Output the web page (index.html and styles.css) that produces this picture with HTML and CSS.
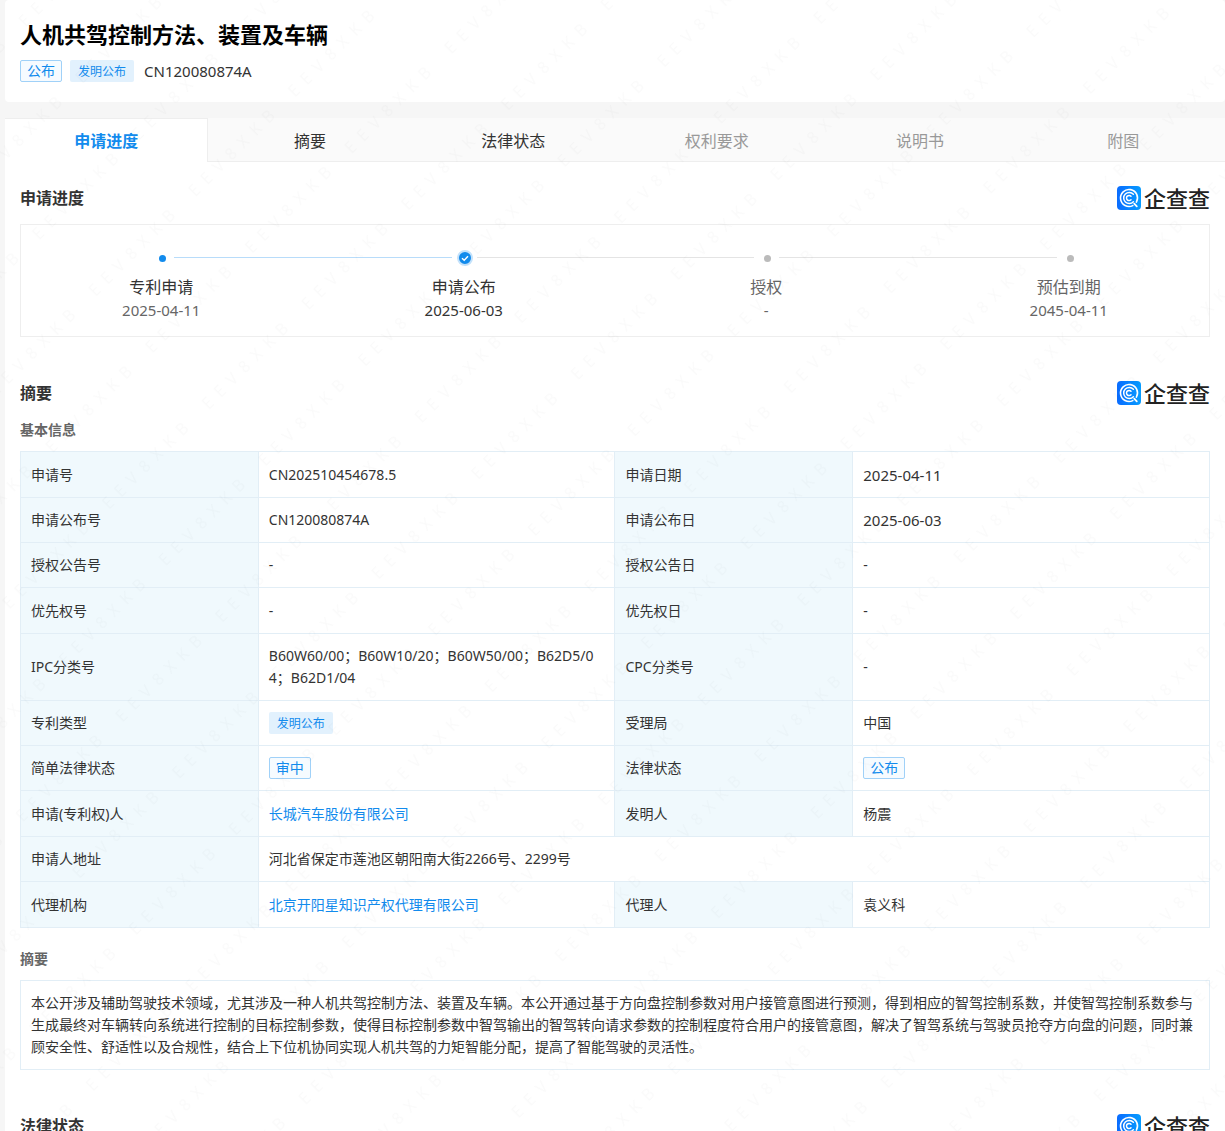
FILE: index.html
```html
<!DOCTYPE html>
<html lang="zh-CN">
<head>
<meta charset="utf-8">
<meta name="viewport" content="width=device-width, initial-scale=1">
<title>人机共驾控制方法、装置及车辆</title>
<link rel="stylesheet" href="styles.css">
</head>
<body>
<svg class="watermark" aria-hidden="true">
  <defs>
    <linearGradient id="brand-bg" x1="0" y1="0" x2="1" y2="0">
      <stop offset="0" stop-color="#0a6cff"/>
      <stop offset="1" stop-color="#069cff"/>
    </linearGradient>
    <symbol id="brand-icon" viewBox="0 0 24 24">
      <rect width="24" height="24" rx="4" fill="url(#brand-bg)"/>
      <g fill="none" stroke="#fff" stroke-linecap="round">
        <path d="M15.8 19.6A8.5 8.5 0 1 1 19.4 16.2" stroke-width="1.6"/>
        <path d="M16.4 15.8A5.6 5.6 0 1 1 16.4 8.2" stroke-width="1.5"/>
        <path d="M14 13.8A2.6 2.6 0 1 1 14 10.2" stroke-width="1.5"/>
        <path d="M17.2 17.6L19.8 20.4" stroke-width="1.8"/>
      </g>
    </symbol>
    <pattern id="mark-tile" width="141" height="80" patternUnits="userSpaceOnUse" patternTransform="translate(650 54) rotate(-45)">
      <text x="0" y="20">E&ensp;E&ensp;V&ensp;8&ensp;X&ensp;K&ensp;B</text>
    </pattern>
  </defs>
  <rect width="100%" height="100%" fill="url(#mark-tile)"/>
</svg>

<header class="header">
  <h1 class="title">人机共驾控制方法、装置及车辆</h1>
  <div class="meta">
    <span class="tag tag-line">公布</span>
    <span class="tag tag-fill">发明公布</span>
    <span class="num">CN120080874A</span>
  </div>
</header>

<main class="card">
  <nav class="tabs">
    <a class="tab active" href="#progress">申请进度</a>
    <a class="tab" href="#abstract">摘要</a>
    <a class="tab" href="#legal">法律状态</a>
    <a class="tab disabled" href="#claims">权利要求</a>
    <a class="tab disabled" href="#description">说明书</a>
    <a class="tab disabled" href="#figures">附图</a>
  </nav>

  <section class="section" id="progress">
    <div class="section-head">
      <h2>申请进度</h2>
      <span class="brand"><svg aria-hidden="true"><use href="#brand-icon"/></svg>企查查</span>
    </div>
    <div class="progress">
      <ol class="steps">
        <li class="step done">
          <span class="mark"><i class="dot"></i></span>
          <span class="step-name">专利申请</span>
          <span class="step-date num">2025-04-11</span>
        </li>
        <li class="step current">
          <span class="mark"><svg viewBox="0 0 16 16" aria-hidden="true"><circle cx="8" cy="8" r="7" fill="#128bed" stroke="#c4e2fb" stroke-width="2"/><path d="M5 8.2l2.2 2.1L11 6.2" fill="none" stroke="#fff" stroke-width="1.4"/></svg></span>
          <span class="step-name">申请公布</span>
          <span class="step-date num">2025-06-03</span>
        </li>
        <li class="step">
          <span class="mark"><i class="dot"></i></span>
          <span class="step-name">授权</span>
          <span class="step-date num">-</span>
        </li>
        <li class="step">
          <span class="mark"><i class="dot"></i></span>
          <span class="step-name">预估到期</span>
          <span class="step-date num">2045-04-11</span>
        </li>
      </ol>
    </div>
  </section>

  <section class="section" id="abstract">
    <div class="section-head">
      <h2>摘要</h2>
      <span class="brand"><svg aria-hidden="true"><use href="#brand-icon"/></svg>企查查</span>
    </div>
    <h3>基本信息</h3>
    <table class="info">
      <tbody>
        <tr><th scope="row">申请号</th><td>CN202510454678.5</td><th scope="row">申请日期</th><td class="num">2025-04-11</td></tr>
        <tr><th scope="row">申请公布号</th><td>CN120080874A</td><th scope="row">申请公布日</th><td class="num">2025-06-03</td></tr>
        <tr><th scope="row">授权公告号</th><td>-</td><th scope="row">授权公告日</th><td>-</td></tr>
        <tr><th scope="row">优先权号</th><td>-</td><th scope="row">优先权日</th><td>-</td></tr>
        <tr><th scope="row">IPC分类号</th><td>B60W60/00；B60W10/20；B60W50/00；B62D5/0<br>4；B62D1/04</td><th scope="row">CPC分类号</th><td>-</td></tr>
        <tr><th scope="row">专利类型</th><td><span class="tag tag-fill">发明公布</span></td><th scope="row">受理局</th><td>中国</td></tr>
        <tr><th scope="row">简单法律状态</th><td><span class="tag tag-line">审中</span></td><th scope="row">法律状态</th><td><span class="tag tag-line">公布</span></td></tr>
        <tr><th scope="row">申请(专利权)人</th><td><a href="#applicant">长城汽车股份有限公司</a></td><th scope="row">发明人</th><td>杨震</td></tr>
        <tr><th scope="row">申请人地址</th><td colspan="3">河北省保定市莲池区朝阳南大街2266号、2299号</td></tr>
        <tr><th scope="row">代理机构</th><td><a href="#agency">北京开阳星知识产权代理有限公司</a></td><th scope="row">代理人</th><td>袁义科</td></tr>
      </tbody>
    </table>
    <h3>摘要</h3>
    <p class="abstract">本公开涉及辅助驾驶技术领域，尤其涉及一种人机共驾控制方法、装置及车辆。本公开通过基于方向盘控制参数对用户接管意图进行预测，得到相应的智驾控制系数，并使智驾控制系数参与生成最终对车辆转向系统进行控制的目标控制参数，使得目标控制参数中智驾输出的智驾转向请求参数的控制程度符合用户的接管意图，解决了智驾系统与驾驶员抢夺方向盘的问题，同时兼顾安全性、舒适性以及合规性，结合上下位机协同实现人机共驾的力矩智能分配，提高了智能驾驶的灵活性。</p>
  </section>

  <section class="section" id="legal">
    <div class="section-head">
      <h2>法律状态</h2>
      <span class="brand"><svg aria-hidden="true"><use href="#brand-icon"/></svg>企查查</span>
    </div>
  </section>
</main>
</body>
</html>
```

FILE: styles.css
```css
* { box-sizing: border-box; }

html { scrollbar-width: none; }

body {
  margin: 0;
  padding-left: 5px;
  background: #f6f6f6;
  color: #333;
  font: 14px/22px "Noto Sans", "Noto Sans CJK SC", sans-serif;
}

h1, h2, h3, p, ol { margin: 0; padding: 0; }
a { color: #128bed; text-decoration: none; }
.num { font-size: 15px; }

.watermark {
  position: fixed;
  inset: 0;
  z-index: 1;
  width: 100%;
  height: 100%;
  opacity: 0.02;
  pointer-events: none;
}
.watermark text { font-size: 16px; }

.header {
  padding: 19px 15px 20px;
  background: #fff;
  border-radius: 4px;
}
.title {
  color: #000;
  font-size: 22px;
  line-height: 30px;
}
.meta {
  display: flex;
  align-items: center;
  gap: 8px;
  margin-top: 11px;
}
.meta .num { margin-left: 2px; }

.tag {
  display: inline-block;
  height: 22px;
  border-radius: 2px;
  color: #128bed;
  vertical-align: top;
}
.tag-line {
  padding: 0 6px;
  border: 1px solid #a0d1f8;
  background: #f6fbff;
  line-height: 20px;
}
.tag-fill {
  padding: 0 8px;
  background: #e2f1fd;
  font-size: 12px;
  line-height: 24px;
}

.card {
  margin-top: 16px;
  background: #fff;
  border-radius: 4px 4px 0 0;
}
.tabs {
  display: grid;
  grid-template-columns: repeat(6, 1fr);
}
.tab {
  height: 44px;
  border-bottom: 1px solid #eee;
  background: #fafafa;
  color: #333;
  font-size: 16px;
  line-height: 46px;
  text-align: center;
}
.tab.active {
  border: solid #eee;
  border-width: 1px 1px 0 0;
  background: #fff;
  color: #128bed;
  font-weight: 700;
  line-height: 44px;
}
.tab.disabled { color: #999; }

.section { padding: 20px 15px; }
.section-head {
  display: flex;
  align-items: center;
  justify-content: space-between;
  height: 32px;
}
h2 { font-size: 16px; line-height: 32px; }
h3 {
  margin-top: 10px;
  color: #666;
  font-size: 14px;
  line-height: 22px;
}
.brand {
  display: flex;
  align-items: center;
  gap: 3px;
  color: #222;
  font-size: 22px;
  font-weight: 500;
  line-height: 24px;
}
.brand svg { width: 24px; height: 24px; }

.progress {
  margin-top: 10px;
  padding: 22px 0 14px;
  border: 1px solid #eee;
}
.steps {
  display: grid;
  grid-template-columns: repeat(4, 1fr);
  margin: 0 -11px;
  list-style: none;
}
.step {
  position: relative;
  display: flex;
  flex-direction: column;
  align-items: center;
  color: #666;
}
.step.current { color: #333; }
.mark {
  display: flex;
  align-items: center;
  justify-content: center;
  width: 100%;
  height: 22px;
  padding-left: 3px;
}
.mark svg { width: 16px; height: 16px; }
.dot {
  width: 7px;
  height: 7px;
  border-radius: 50%;
  background: #bbb;
}
.done .dot { background: #128bed; }
.step:not(:last-child)::after {
  content: "";
  position: absolute;
  top: 10px;
  left: calc(50% + 13px);
  width: calc(100% - 25px);
  height: 1px;
  background: #e4e4e4;
}
.step.done::after { background: #b8dcfa; }
.step-name {
  margin-top: 7px;
  font-size: 16px;
  line-height: 22px;
}
.done .step-name { color: #333; }
.step-date { line-height: 24px; }

.info {
  width: 100%;
  margin: 10px 0 20px;
  border-collapse: collapse;
  table-layout: fixed;
}
.info tr { height: 45px; }
.info tr:nth-child(4n), .info tr:first-child, .info tr:last-child { height: 46px; }
.info th, .info td {
  width: 30%;
  padding: 11px 10px;
  border: 1px solid #e2eef6;
  font-weight: 400;
  text-align: left;
}
.info th {
  width: 20%;
  background: #f0f9fd;
}

.abstract {
  margin-top: 10px;
  padding: 11px 10px;
  border: 1px solid #e2eef6;
}
```
